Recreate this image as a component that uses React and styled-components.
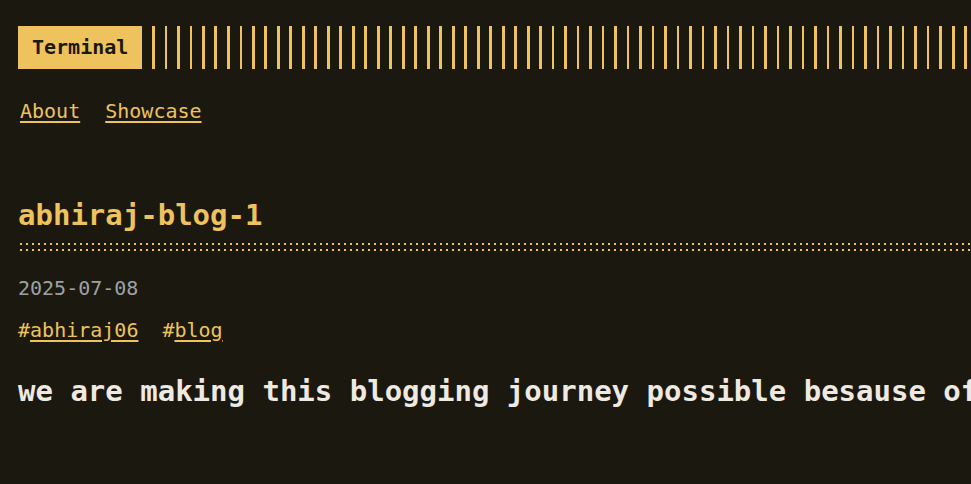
import styled, { createGlobalStyle } from 'styled-components';

const GlobalStyle = createGlobalStyle`
  html, body {
    margin: 0;
    padding: 0;
    background: #1b1810;
    overflow: hidden;
  }
  body {
    font-family: "DejaVu Sans Mono", "Liberation Mono", monospace;
    font-size: 20px;
    line-height: 1.54;
    color: #eeeae2;
  }
`;

const accent = '#eec35e';

function App() {
  return (
    <>
      <GlobalStyle />
      <Page>
        <Header>
          <Logo href="#">Terminal</Logo>
          <Stripes />
        </Header>
        <Nav>
          <NavLink href="#">About</NavLink>
          <NavLink href="#">Showcase</NavLink>
        </Nav>
        <Post>
          <PostTitle>abhiraj-blog-1</PostTitle>
          <Dots />
          <PostDate>2025-07-08</PostDate>
          <Tags>
            <Tag>#<TagLink href="#">abhiraj06</TagLink></Tag>
            <Tag>#<TagLink href="#">blog</TagLink></Tag>
          </Tags>
          <Lead>we are making this blogging journey possible besause of you all</Lead>
        </Post>
      </Page>
    </>
  );
}

const Page = styled.div`
  width: 1400px;
  padding: 26px 0 0 18px;
  box-sizing: border-box;
`;

const Header = styled.header`
  display: flex;
  align-items: stretch;
  gap: 10px;
  height: 43px;
`;

const Logo = styled.a`
  display: flex;
  align-items: center;
  padding: 0 14px;
  background: ${accent};
  color: #1b1810;
  font-weight: bold;
  text-decoration: none;
`;

const Stripes = styled.div`
  flex: 1;
  background: repeating-linear-gradient(
    90deg,
    ${accent} 0,
    ${accent} 2.5px,
    transparent 2.5px,
    transparent 12.5px
  );
`;

const Nav = styled.nav`
  display: flex;
  gap: 25px;
  margin-top: 27px;
  padding-left: 2px;
`;

const NavLink = styled.a`
  color: ${accent};
  text-decoration: underline;
  text-underline-offset: 3px;
  text-decoration-thickness: 1.5px;
`;

const Post = styled.article`
  margin-top: 69px;
`;

const PostTitle = styled.h1`
  margin: 0;
  font-size: 29px;
  line-height: 38px;
  font-weight: bold;
  color: ${accent};
  padding-bottom: 9px;
`;

const Dots = styled.div`
  height: 8px;
  background-image:
    radial-gradient(circle at 1px 1px, ${accent} 1.2px, transparent 1.5px),
    radial-gradient(circle at 1px 1px, ${accent} 1.2px, transparent 1.5px);
  background-size: 6px 2px, 6px 2px;
  background-position: 2px 0, 2px 6px;
  background-repeat: repeat-x;
`;

const PostDate = styled.div`
  margin-top: 22px;
  color: #9ea1a3;
`;

const Tags = styled.div`
  display: flex;
  gap: 24px;
  margin-top: 11px;
  color: ${accent};
`;

const Tag = styled.span``;

const TagLink = styled.a`
  color: ${accent};
  text-decoration: underline;
  text-underline-offset: 3px;
  text-decoration-thickness: 1.5px;
`;

const Lead = styled.h2`
  margin: 27px 0 0;
  font-size: 29px;
  line-height: 38px;
  font-weight: bold;
  white-space: nowrap;
  color: #eeeae2;
`;

export default App;
